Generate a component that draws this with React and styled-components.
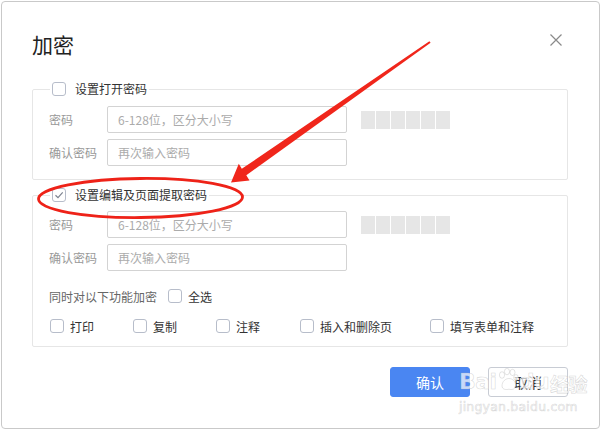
import React from "react";
import styled, { createGlobalStyle } from "styled-components";

const Global = createGlobalStyle`
  html, body { margin: 0; padding: 0; background: #fff; }
  body { font-family: "Noto Sans CJK SC", "Noto Sans", sans-serif; }
  * { box-sizing: border-box; }
`;

const Dialog = styled.div`
  position: relative;
  margin: 1px 0 0 1px;
  width: 599px;
  height: 428px;
  border: 1px solid #c9c9c9;
  border-radius: 4px;
  background: #fff;
  padding: 26px 31px 0 30px;
  display: flex;
  flex-direction: column;
  color: #333;
`;

const Header = styled.div`
  display: flex;
  justify-content: space-between;
  align-items: flex-start;
  height: 32px;
`;

const Title = styled.h1`
  margin: 0;
  font-size: 21px;
  line-height: 32px;
  font-weight: 400;
  color: #222;
`;

const Close = styled.button`
  border: 0;
  background: none;
  padding: 0;
  margin: 6px 6px 0 0;
  width: 12px;
  height: 12px;
  display: block;
  cursor: pointer;
`;

const Group = styled.fieldset`
  margin: ${(p) => (p.$first ? "21px" : "7px")} 0 0 0;
  padding: ${(p) => p.$pt}px 16px ${(p) => p.$pb}px 16px;
  border: 1px solid #e6e6e6;
  border-radius: 2px;
  min-width: 0;
`;

const Legend = styled.legend`
  margin-left: 1px;
  padding: 0 2px;
  display: flex;
  align-items: center;
  height: 16px;
  font-size: 12px;
  line-height: 16px;
  color: #333;
`;

const Box = styled.span`
  display: inline-flex;
  align-items: center;
  justify-content: center;
  width: 14px;
  height: 14px;
  border: 1px solid #b7bdca;
  border-radius: 3px;
  background: #fff;
  flex: none;
  margin-right: ${(p) => p.$gap || 6}px;
`;

const Row = styled.div`
  display: flex;
  align-items: center;
  & + & { margin-top: 6px; }
`;

const Label = styled.span`
  width: 58px;
  font-size: 12px;
  color: #999;
  flex: none;
`;

const Input = styled.input`
  width: 240px;
  height: 27px;
  border: 1px solid #d3d3d3;
  border-radius: 2px;
  padding: 0 10px;
  font-family: inherit;
  font-size: 12px;
  color: #333;
  outline: none;
  &::placeholder { color: #ababab; }
`;

const Strength = styled.div`
  display: flex;
  gap: 1px;
  margin-left: 14px;
`;

const Block = styled.span`
  width: 14px;
  height: 18px;
  background: #e6e6e6;
`;

const AllRow = styled.div`
  display: flex;
  align-items: center;
  height: 20px;
  margin-top: 15px;
  font-size: 12px;
  color: #666;
`;

const AllText = styled.span`
  margin-right: 11px;
`;

const AllLabel = styled.span`
  color: #333;
`;

const Options = styled.div`
  display: grid;
  grid-template-columns: 83px 83px 84px 130px auto;
  margin: 10px 0 0 1px;
  height: 20px;
  align-items: center;
`;

const Option = styled.label`
  display: flex;
  align-items: center;
  font-size: 12px;
  color: #333;
`;

const Footer = styled.div`
  display: flex;
  justify-content: flex-end;
  gap: 18px;
  margin-top: 20px;
`;

const Button = styled.button`
  width: 80px;
  height: 30px;
  border-radius: 3px;
  font-family: inherit;
  font-size: 14px;
  cursor: pointer;
  border: 1px solid ${(p) => (p.$primary ? "#4a86f2" : "#c8ccd4")};
  background: ${(p) => (p.$primary ? "#4a86f2" : "#fff")};
  color: ${(p) => (p.$primary ? "#fff" : "#333")};
`;

const Annotation = styled.svg`
  position: absolute;
  left: -2px;
  top: -2px;
  width: 600px;
  height: 429px;
  pointer-events: none;
`;

const Watermark = styled.div`
  position: absolute;
  left: 457px;
  top: 366px;
  pointer-events: none;
  font-family: "DejaVu Sans", "Noto Sans CJK SC", sans-serif;
  color: rgba(255, 255, 255, 0.7);
  -webkit-text-stroke: 0.6px rgba(170, 170, 170, 0.45);
  line-height: 1;
`;

const Mark = styled.div`
  display: flex;
  align-items: flex-end;
  font-size: 22px;
  font-weight: 700;
  letter-spacing: -0.5px;
`;

const MarkCn = styled.span`
  font-family: "Noto Sans CJK SC", sans-serif;
  font-size: 19px;
  font-weight: 700;
  margin-left: 1px;
`;

const Url = styled.div`
  margin-top: 8px;
  font-size: 12.5px;
  letter-spacing: 0.2px;
`;

const Check = ({ checked, gap }) => (
  <Box $gap={gap}>
    {checked && (
      <svg width="10" height="10" viewBox="0 0 10 10">
        <path d="M1.5 5.2 L4 7.6 L8.7 2.4" fill="none" stroke="#7d8390" strokeWidth="1.2" />
      </svg>
    )}
  </Box>
);

const Meter = () => (
  <Strength>
    {[0, 1, 2, 3, 4, 5].map((i) => (
      <Block key={i} />
    ))}
  </Strength>
);

const Fields = () => (
  <>
    <Row>
      <Label>密码</Label>
      <Input placeholder="6-128位，区分大小写" />
      <Meter />
    </Row>
    <Row>
      <Label>确认密码</Label>
      <Input placeholder="再次输入密码" />
    </Row>
  </>
);

const options = ["打印", "复制", "注释", "插入和删除页", "填写表单和注释"];

export default function App() {
  return (
    <>
      <Global />
      <Dialog>
        <Header>
          <Title>加密</Title>
          <Close aria-label="关闭">
            <svg width="12" height="12" viewBox="0 0 12 12">
              <path d="M0.5 0.5 L11.5 11.5 M11.5 0.5 L0.5 11.5" stroke="#8a8a8a" strokeWidth="1.2" />
            </svg>
          </Close>
        </Header>

        <Group $first $pt={9} $pb={13}>
          <Legend>
            <Check gap={9} />
            设置打开密码
          </Legend>
          <Fields />
        </Group>

        <Group $pt={8} $pb={10}>
          <Legend>
            <Check checked gap={9} />
            设置编辑及页面提取密码
          </Legend>
          <Fields />
          <AllRow>
            <AllText>同时对以下功能加密</AllText>
            <Check />
            <AllLabel>全选</AllLabel>
          </AllRow>
          <Options>
            {options.map((o) => (
              <Option key={o}>
                <Check />
                {o}
              </Option>
            ))}
          </Options>
        </Group>

        <Footer>
          <Button $primary>确认</Button>
          <Button>取消</Button>
        </Footer>

        <Annotation viewBox="0 0 600 429">
          <path
            d="M429.4 41.3 L430.6 42.7 L246.3 175.2 L249.5 180.5 L231 182.5 L238.8 163.8 L241.8 168.8 Z"
            fill="#f0261b"
          />
          <ellipse cx="140.5" cy="198" rx="102" ry="19.5" fill="none" stroke="#ee2218" strokeWidth="2.8" transform="rotate(-0.6 140.5 198)" />
        </Annotation>

        <Watermark>
          <Mark>
            Bai
            <svg width="22" height="24" viewBox="0 0 22 24" style={{ marginBottom: 1 }}>
              <g fill="rgba(255,255,255,0.7)" stroke="rgba(170,170,170,0.45)" strokeWidth="0.7">
                <ellipse cx="5" cy="7" rx="2.6" ry="3.3" />
                <ellipse cx="10" cy="3.6" rx="2.6" ry="3.2" />
                <ellipse cx="15.5" cy="4.4" rx="2.5" ry="3.1" />
                <ellipse cx="19" cy="9.5" rx="2.3" ry="2.9" />
                <path d="M5 18 C5 13 9 10.5 12 10.5 C15 10.5 19 13 18.5 18 C18 21.5 15 22 12 21.2 C9 22 5.2 21.5 5 18 Z" />
              </g>
            </svg>
            du
            <MarkCn>经验</MarkCn>
          </Mark>
          <Url>jingyan.baidu.com</Url>
        </Watermark>
      </Dialog>
    </>
  );
}
